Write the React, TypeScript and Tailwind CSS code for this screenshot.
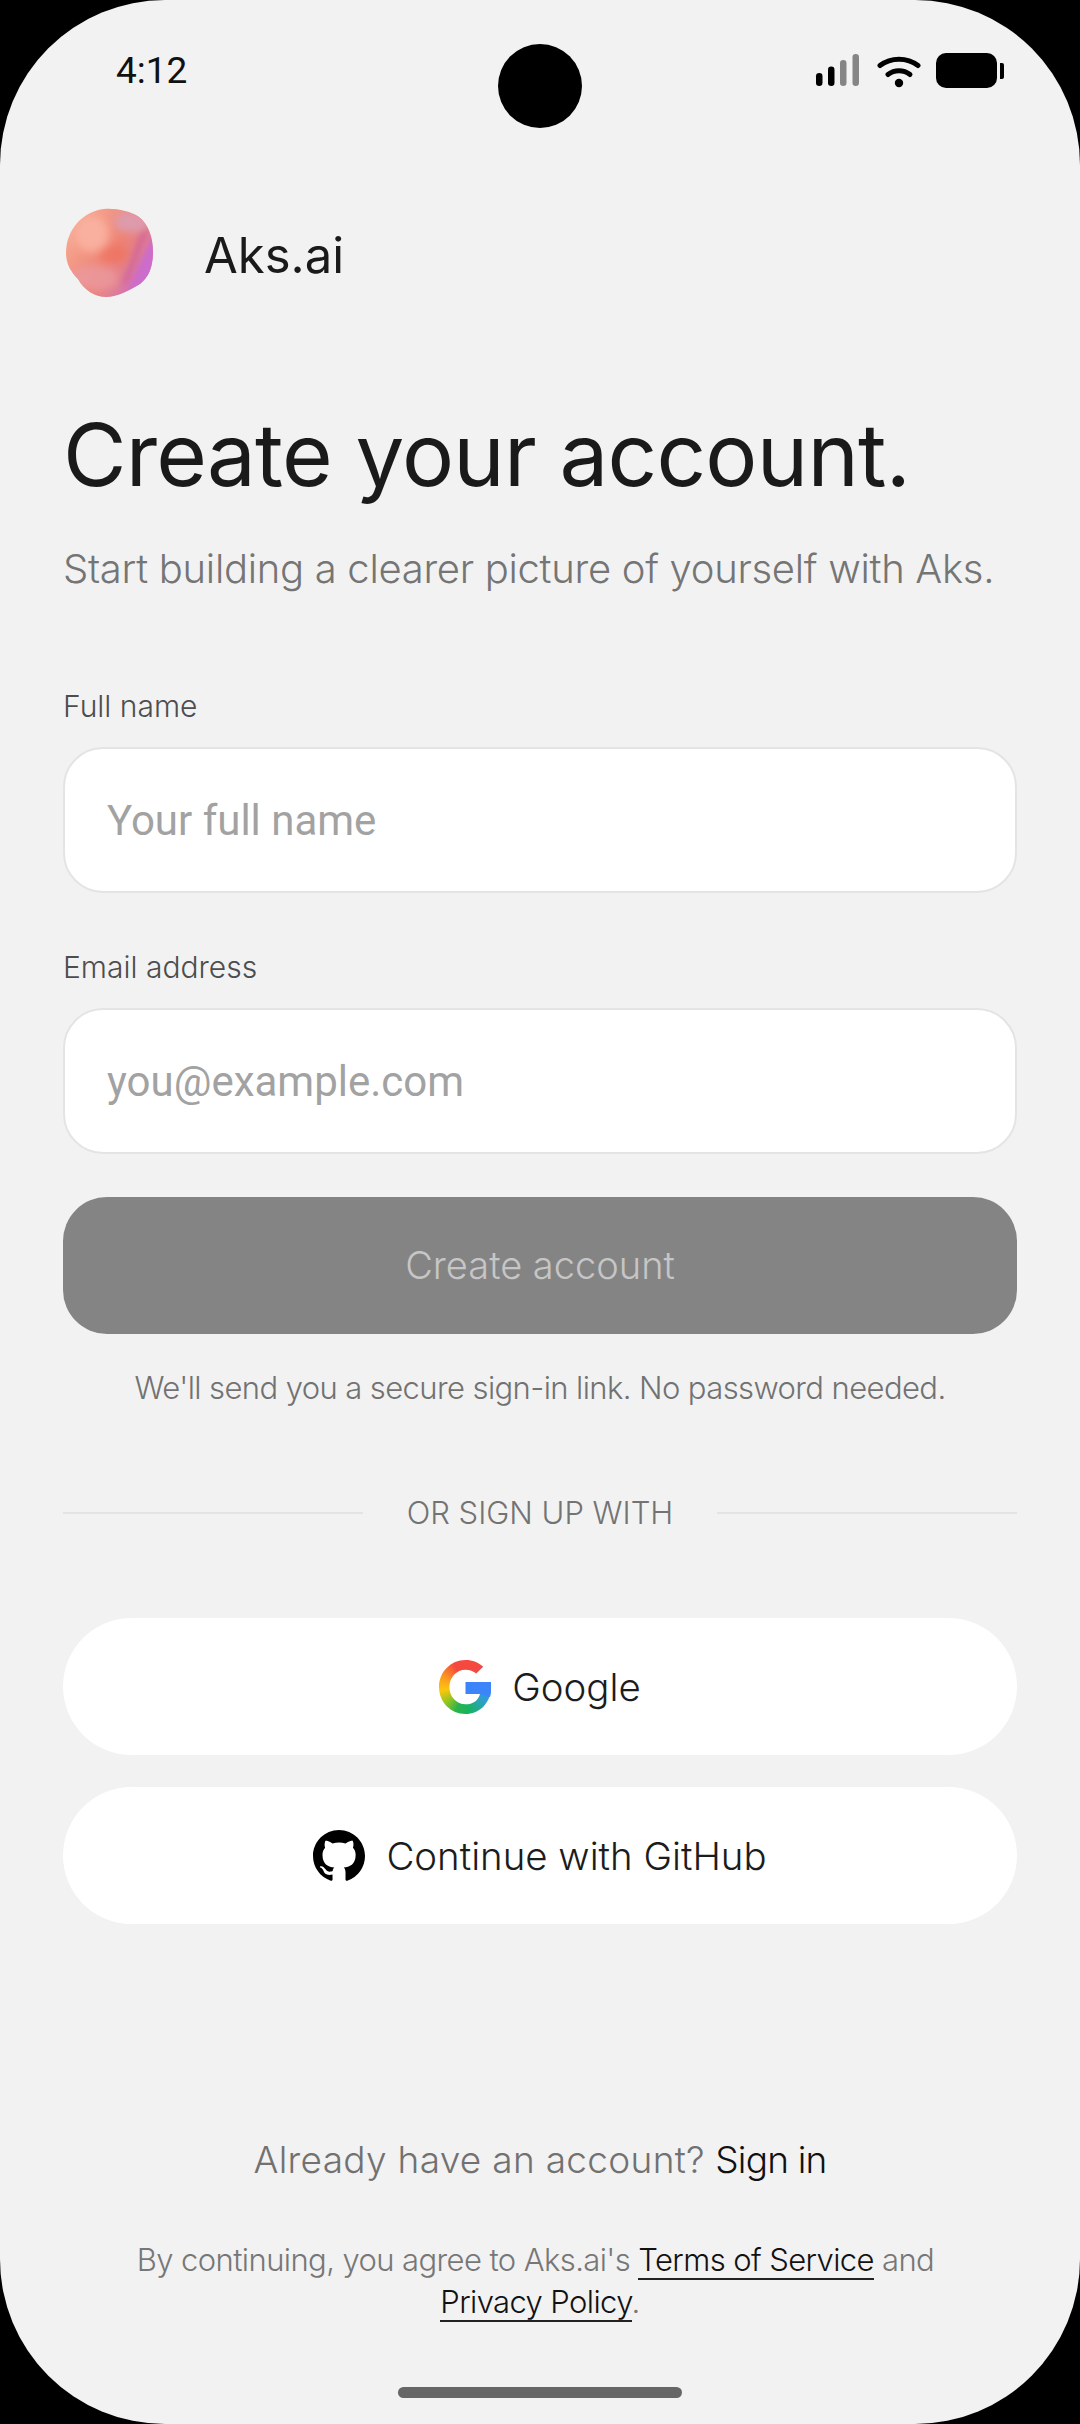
function StatusIcons() {
  return (
    <div className="flex items-center">
      <svg width="48" height="34" viewBox="0 0 46 34" className="mr-[15px]">
        <rect x="1" y="19" width="6.5" height="13" rx="3.2" fill="#000" />
        <rect x="13" y="12.5" width="6.5" height="19.5" rx="3.2" fill="#000" />
        <rect x="25" y="6" width="6.5" height="26" rx="3.2" fill="#858585" />
        <rect x="37.5" y="0" width="6.5" height="32" rx="3.2" fill="#858585" />
      </svg>
      <svg width="44" height="34" viewBox="0 0 44 34" className="mr-[15px]" fill="none">
        <path d="M3 11.5C14 3 30 3 41 11.5" stroke="#000" strokeWidth="5" strokeLinecap="round" />
        <path d="M11 20.5C17.5 15.5 26.5 15.5 33 20.5" stroke="#000" strokeWidth="5" strokeLinecap="round" />
        <circle cx="22" cy="29" r="4.2" fill="#000" />
      </svg>
      <div className="w-[61px] h-[35px] rounded-[10px] bg-black" />
      <div className="w-[4px] h-[16px] bg-black ml-[3px] rounded-r-[2px]" />
    </div>
  )
}

function Blob() {
  return (
    <svg width="90" height="90" viewBox="0 0 88 90" className="-mt-[6px]">
      <defs>
        <clipPath id="blobClip">
          <path d="M38 1C50 0 64 3 73 9C82 16 87 28 87 44C87 58 83 69 74 76C64 82 52 89 40 89C29 89 18 82 12 71C5 64 0 56 0 45C0 33 4 23 12 14C19 7 28 2 38 1Z" />
        </clipPath>
        <linearGradient id="blobBase" x1="0.1" y1="0.2" x2="0.95" y2="0.8">
          <stop offset="0" stopColor="#f6a892" />
          <stop offset="0.5" stopColor="#ee8273" />
          <stop offset="0.72" stopColor="#e27f8e" />
          <stop offset="1" stopColor="#cc68d0" />
        </linearGradient>
        <filter id="blobSoft" x="-20%" y="-20%" width="140%" height="140%">
          <feGaussianBlur stdDeviation="4" />
        </filter>
        <filter id="blobEdge" x="-20%" y="-20%" width="140%" height="140%">
          <feGaussianBlur stdDeviation="2.5" />
        </filter>
      </defs>
      <g clipPath="url(#blobClip)">
        <rect width="88" height="90" fill="url(#blobBase)" />
        <g filter="url(#blobSoft)">
          <ellipse cx="26" cy="26" rx="17" ry="18" fill="#fbb3a2" opacity="0.9" />
          <ellipse cx="66" cy="14" rx="18" ry="11" fill="#dc9db4" opacity="0.9" />
          <ellipse cx="28" cy="70" rx="24" ry="13" fill="#eb9aa0" opacity="0.8" />
          <ellipse cx="48" cy="46" rx="15" ry="9" fill="#ee7461" opacity="0.85" />
        </g>
        <path d="M88 24L88 70L62 84Z" fill="#cc6ccb" filter="url(#blobEdge)" />
        <path d="M74 26L84 20L62 74L56 76Z" fill="#c95aa0" opacity="0.55" filter="url(#blobEdge)" />
      </g>
    </svg>
  )
}

function GoogleIcon() {
  return (
    <svg width="52" height="54" viewBox="0 0 52 54">
      <defs>
        <clipPath id="gClip">
          <path d="M26.5 0C33.6 0 39.6 2.6 44.2 6.8L37.2 13.6C34.4 11.1 30.8 9.7 26.6 9.7C17.4 9.7 10.4 17.5 10.4 27C10.4 36.5 17.4 44.3 26.6 44.3C33.8 44.3 39.4 40.4 41 33.9L52 29.5C50.6 44 40 54 26.5 54C11.8 54 0 42 0 27C0 12 11.8 0 26.5 0Z" />
        </clipPath>
      </defs>
      <foreignObject x="0" y="0" width="52" height="54" clipPath="url(#gClip)">
        <div className="w-[52px] h-[54px] bg-[conic-gradient(from_0deg_at_50%_50%,#f5483f_0deg,#f5483f_35deg,#3b8af5_85deg,#2e9fd0_125deg,#18b35f_170deg,#28b34c_200deg,#8dc424_228deg,#fcc60c_262deg,#fb9a1f_295deg,#f5483f_335deg,#f5483f_360deg)]" />
      </foreignObject>
      <path d="M26.5 22H52V30C52 33 51.6 35 51 37L41 34H26.5Z" fill="#3b84fa" />
    </svg>
  )
}

function GithubIcon() {
  return (
    <svg width="52" height="52" viewBox="0 0 16 16" fill="#000">
      <path d="M8 0C3.58 0 0 3.58 0 8c0 3.54 2.29 6.53 5.47 7.59.4.07.55-.17.55-.38 0-.19-.01-.82-.01-1.49-2.01.37-2.53-.49-2.69-.94-.09-.23-.48-.94-.82-1.13-.28-.15-.68-.52-.01-.53.63-.01 1.08.58 1.23.82.72 1.21 1.87.87 2.33.66.07-.52.28-.87.51-1.07-1.78-.2-3.64-.89-3.64-3.95 0-.87.31-1.59.82-2.15-.08-.2-.36-1.02.08-2.12 0 0 .67-.21 2.2.82.64-.18 1.32-.27 2-.27.68 0 1.36.09 2 .27 1.53-1.04 2.2-.82 2.2-.82.44 1.1.16 1.92.08 2.12.51.56.82 1.27.82 2.15 0 3.07-1.87 3.75-3.65 3.95.29.25.54.73.54 1.48 0 1.07-.01 1.93-.01 2.2 0 .21.15.46.55.38A8.013 8.013 0 0 0 16 8c0-4.42-3.58-8-8-8z" />
    </svg>
  )
}

function Field({ label, placeholder, top }: { label: string; placeholder: string; top: string }) {
  return (
    <div className={top}>
      <div className="text-[30px] leading-[40px] font-light text-[#4d4d4d]">{label}</div>
      <div className="mt-[21px] h-[146px] rounded-[40px] border-2 border-[#e4e4e4] bg-white flex items-center pl-[42px]">
        <span className="font-['Roboto',sans-serif] text-[42px] text-[#a2a2a2]">{placeholder}</span>
      </div>
    </div>
  )
}

function SocialButton({ icon, label, top }: { icon: React.ReactNode; label: string; top: string }) {
  return (
    <div className={`${top} h-[137px] rounded-full bg-white flex items-center justify-center gap-[21px]`}>
      {icon}
      <span className="text-[38.4px] font-light text-[#1c1c1c] translate-y-[1px]">{label}</span>
    </div>
  )
}

export default function App() {
  return (
    <div className="w-[1080px] h-[2424px] bg-black font-['Inter',sans-serif]">
      <div className="relative w-full h-full bg-[#f2f2f2] rounded-[165px] overflow-hidden flex flex-col">
        {/* punch hole */}
        <div className="absolute left-[498px] top-[44px] w-[84px] h-[84px] rounded-full bg-black" />

        {/* status bar */}
        <div className="flex items-start justify-between pl-[116px] pr-[76px] pt-[50px]">
          <span className="font-['Roboto',sans-serif] text-[37px] leading-[42px] text-[#111]">4:12</span>
          <div className="pt-[3px]">
            <StatusIcons />
          </div>
        </div>

        <div className="px-[63px] flex flex-col flex-1">
          <div className="mt-[122px] ml-[2px] flex items-center gap-[49px]">
            <Blob />
            <span className="text-[49px] leading-[60px] text-[#1a1a1a]">Aks.ai</span>
          </div>

          <h1 className="mt-[107px] text-[87px] leading-[100px] tracking-[-0.8px] font-normal text-[#1a1a1a] whitespace-nowrap">
            Create your account.
          </h1>
          <p className="mt-[39px] text-[40px] leading-[50px] tracking-[-0.3px] font-light text-[#757575] whitespace-nowrap">
            Start building a clearer picture of yourself with Aks.
          </p>

          <Field top="mt-[92px]" label="Full name" placeholder="Your full name" />
          <Field top="mt-[54px]" label="Email address" placeholder="you@example.com" />

          <div className="mt-[43px] h-[137px] rounded-[44px] bg-[#848484] flex items-center justify-center text-[38px] font-light text-[#c6c6c6]">
            Create account
          </div>
          <p className="mt-[32px] text-center text-[31px] leading-[44px] tracking-[-0.6px] font-light text-[#727272]">
            We'll send you a secure sign-in link. No password needed.
          </p>

          <div className="mt-[81px] flex items-center justify-between">
            <div className="w-[300px] h-[2px] bg-[#e4e4e4]" />
            <span className="text-[31px] leading-[44px] font-light text-[#737373]">OR SIGN UP WITH</span>
            <div className="w-[300px] h-[2px] bg-[#e4e4e4]" />
          </div>

          <SocialButton top="mt-[83px]" icon={<GoogleIcon />} label="Google" />
          <SocialButton top="mt-[32px]" icon={<GithubIcon />} label="Continue with GitHub" />

          <p className="mt-[211px] text-center text-[37px] leading-[50px] font-light text-[#717171]">
            <span className="tracking-[0.3px]">Already have an account?</span>{' '}
            <span className="text-[#111] tracking-[-0.8px]">Sign in</span>
          </p>
          <p className="mt-[54px] text-center text-[31px] leading-[42px] tracking-[-0.6px] font-light text-[#777]">
            <span className="block pr-[9px]">
              By continuing, you agree to Aks.ai's{' '}
              <span className="text-[#111] border-b-2 border-[#222]">Terms of Service</span> and
            </span>
            <span className="text-[#111] border-b-2 border-[#222]">Privacy Policy</span>.
          </p>

          <div className="mt-auto mb-[26px] mx-auto w-[284px] h-[11px] rounded-full bg-[#666]" />
        </div>
      </div>
    </div>
  )
}
